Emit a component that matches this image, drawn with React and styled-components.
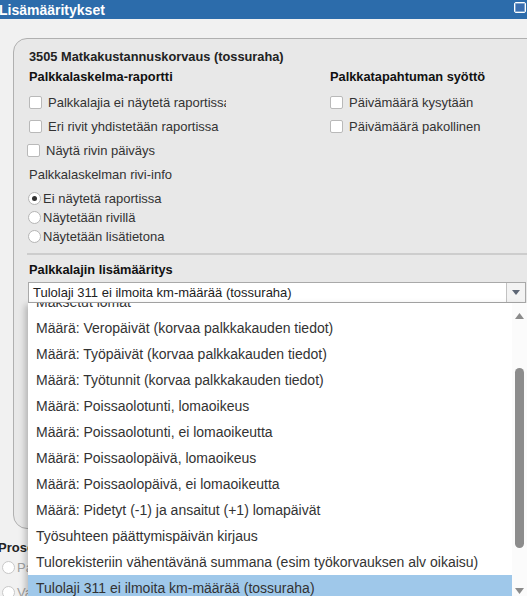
import React from 'react';
import styled, { createGlobalStyle } from 'styled-components';

const GlobalStyle = createGlobalStyle`
  html, body {
    margin: 0;
    padding: 0;
    overflow: hidden;
    background: #f1f1f1;
  }
  body {
    font-family: "Liberation Sans", Arial, sans-serif;
    font-size: 13px;
    color: #222;
  }
`;

const options = [
  'Maksetut lomat',
  'Määrä: Veropäivät (korvaa palkkakauden tiedot)',
  'Määrä: Työpäivät (korvaa palkkakauden tiedot)',
  'Määrä: Työtunnit (korvaa palkkakauden tiedot)',
  'Määrä: Poissaolotunti, lomaoikeus',
  'Määrä: Poissaolotunti, ei lomaoikeutta',
  'Määrä: Poissaolopäivä, lomaoikeus',
  'Määrä: Poissaolopäivä, ei lomaoikeutta',
  'Määrä: Pidetyt (-1) ja ansaitut (+1) lomapäivät',
  'Työsuhteen päättymispäivän kirjaus',
  'Tulorekisteriin vähentävänä summana (esim työkorvauksen alv oikaisu)',
  'Tulolaji 311 ei ilmoita km-määrää (tossuraha)',
];

const App = () => {
  return (
    <>
      <GlobalStyle />
      <Window>
        <TitleBar>
          <span>Lisämääritykset</span>
          <CloseBox />
        </TitleBar>
        <Body>
          <Panel>
            <Title>3505 Matkakustannuskorvaus (tossuraha)</Title>
            <Columns>
              <Column>
                <Heading>Palkkalaskelma-raportti</Heading>
                <CheckRow>
                  <Box />
                  <CheckText>Palkkalajia ei näytetä raportissa</CheckText>
                </CheckRow>
                <CheckRow>
                  <Box />
                  <CheckText>Eri rivit yhdistetään raportissa</CheckText>
                </CheckRow>
                <CheckRow $shift>
                  <Box />
                  Näytä rivin päiväys
                </CheckRow>
              </Column>
              <Column>
                <Heading>Palkkatapahtuman syöttö</Heading>
                <CheckRow>
                  <Box />
                  Päivämäärä kysytään
                </CheckRow>
                <CheckRow>
                  <Box />
                  Päivämäärä pakollinen
                </CheckRow>
              </Column>
            </Columns>
            <Label>Palkkalaskelman rivi-info</Label>
            <RadioGroup>
              <RadioRow>
                <Radio $checked />
                Ei näytetä raportissa
              </RadioRow>
              <RadioRow>
                <Radio />
                Näytetään rivillä
              </RadioRow>
              <RadioRow>
                <Radio />
                Näytetään lisätietona
              </RadioRow>
            </RadioGroup>
            <Divider />
            <Heading>Palkkalajin lisämääritys</Heading>
            <Select>
              <SelectValue>Tulolaji 311 ei ilmoita km-määrää (tossuraha)</SelectValue>
              <SelectArrow>
                <svg width="8" height="5" viewBox="0 0 8 5">
                  <path d="M0 0h8L4 5z" fill="#5d6675" />
                </svg>
              </SelectArrow>
            </Select>
            <CheckRow>
              <Box $accent />
              Maksetaan
            </CheckRow>
          </Panel>
          <Lower>
            <LowerHeading>Prosenttiperusteinen</LowerHeading>
            <RadioRow $dim>
              <Radio $dim />
              Palkka
            </RadioRow>
            <RadioRow $dim>
              <Radio $dim />
              Vakio
            </RadioRow>
          </Lower>
        </Body>
        <Dropdown>
          <List>
            {options.map((o, i) => (
              <Option key={o} $selected={i === options.length - 1}>
                {o}
              </Option>
            ))}
          </List>
          <Scrollbar>
            <svg width="9" height="6" viewBox="0 0 9 6">
              <path d="M0 6h9L4.5 0z" fill="#8b8b8b" />
            </svg>
            <Thumb />
            <svg width="9" height="6" viewBox="0 0 9 6">
              <path d="M0 0h9L4.5 6z" fill="#8b8b8b" />
            </svg>
          </Scrollbar>
        </Dropdown>
      </Window>
    </>
  );
};

export default App;

const Window = styled.div`
  position: relative;
  width: 527px;
  height: 596px;
  overflow: hidden;
  background: #f1f1f1;
`;

const TitleBar = styled.div`
  display: flex;
  align-items: center;
  justify-content: space-between;
  height: 19px;
  background: #2c6cab;
  color: #fff;
  font-weight: bold;
  font-size: 14px;
  margin-left: -1px;
`;

const CloseBox = styled.div`
  width: 10px;
  height: 9px;
  border: 1px solid #fff;
  box-shadow: inset 0 0 0 1px #7fa6cf;
  background: #3b6fb0;
  margin-right: 1px;
  margin-bottom: 4px;
  border-radius: 2px;
`;

const Body = styled.div`
  padding: 19px 0 0 13px;
`;

const Panel = styled.div`
  height: 479px;
  margin-right: -20px;
  padding: 10px 0 0 15px;
  background: #e8e8e8;
  border: 1px solid #b0b0b0;
  border-radius: 14px 0 0 14px;
  overflow: hidden;
`;

const Title = styled.div`
  font-size: 12.8px;
  font-weight: bold;
  line-height: 16px;
  color: #222;
`;

const Columns = styled.div`
  display: grid;
  grid-template-columns: 301px 1fr;
  margin-top: 4px;
`;

const Column = styled.div`
  display: flex;
  flex-direction: column;
`;

const Heading = styled.div`
  font-weight: bold;
  font-size: 12.8px;
  line-height: 16px;
  color: #111;
  margin-bottom: 5px;
`;

const CheckRow = styled.label`
  display: flex;
  align-items: center;
  gap: 6px;
  height: 24px;
  font-size: 13px;
  color: #333;
  margin-left: ${(p) => (p.$shift ? '-2px' : '0')};
`;

const CheckText = styled.span`
  max-width: 178px;
  overflow: hidden;
  white-space: nowrap;
`;

const Box = styled.span`
  width: 11px;
  height: 11px;
  background: #fff;
  border: 1px solid ${(p) => (p.$accent ? '#d08a3c' : '#b9b9b9')};
  border-radius: 2px;
  flex-shrink: 0;
`;

const Label = styled.div`
  font-size: 13px;
  line-height: 16px;
  color: #333;
  margin-top: 5px;
`;

const RadioGroup = styled.div`
  display: flex;
  flex-direction: column;
  margin-top: 6px;
  margin-left: -1px;
`;

const RadioRow = styled.label`
  display: flex;
  align-items: center;
  gap: 2px;
  height: ${(p) => (p.$dim ? '25px' : '19px')};
  font-size: 13px;
  color: ${(p) => (p.$dim ? '#a0a0a0' : '#333')};
  white-space: nowrap;
`;

const Radio = styled.span`
  position: relative;
  width: 11px;
  height: 11px;
  border-radius: 50%;
  background: #fff;
  border: 1px solid ${(p) => (p.$dim ? '#c8c8c8' : '#b5b5b5')};
  flex-shrink: 0;

  &::after {
    content: '';
    display: ${(p) => (p.$checked ? 'block' : 'none')};
    position: absolute;
    left: 3px;
    top: 3px;
    width: 5px;
    height: 5px;
    border-radius: 50%;
    background: #333;
  }
`;

const Divider = styled.div`
  height: 0;
  border-top: 2px solid #cdcdcd;
  margin: 7px 0 7px -2px;
`;

const Select = styled.div`
  display: flex;
  align-items: stretch;
  height: 19px;
  margin-left: -1px;
  margin-right: 20px;
  margin-top: -1px;
  background: #fff;
  border: 1px solid #a9a9a9;
`;

const SelectValue = styled.div`
  flex: 1;
  display: flex;
  align-items: center;
  padding-left: 4px;
  font-size: 13px;
  color: #222;
`;

const SelectArrow = styled.div`
  width: 18px;
  display: flex;
  align-items: center;
  justify-content: center;
  border-left: 1px solid #c2c2c2;
  background: #f3f3f3;
`;

const Lower = styled.div`
  padding: 12px 0 0 2px;
  margin-left: -13px;
`;

const LowerHeading = styled.div`
  font-weight: bold;
  font-size: 13px;
  line-height: 14px;
  color: #222;
  margin-bottom: 0;
  margin-left: -4px;
`;

const Dropdown = styled.div`
  position: absolute;
  left: 28px;
  top: 303px;
  right: 0;
  bottom: 0;
  display: flex;
  background: #fff;
  box-shadow: -3px 2px 6px rgba(0, 0, 0, 0.22);
  overflow: hidden;
`;

const List = styled.div`
  flex: 1;
  margin-top: -14px;
  display: flex;
  flex-direction: column;
`;

const Option = styled.div`
  flex-shrink: 0;
  height: 26px;
  display: flex;
  align-items: center;
  padding-left: 8px;
  font-size: 14px;
  white-space: nowrap;
  color: #333;
  background: ${(p) => (p.$selected ? '#9fc8ea' : 'transparent')};
`;

const Scrollbar = styled.div`
  width: 15px;
  flex-shrink: 0;
  display: flex;
  flex-direction: column;
  align-items: center;
  background: #fbfbfb;
  padding: 10px 0 0;

  svg:last-child {
    margin-top: auto;
    margin-bottom: 2px;
  }
`;

const Thumb = styled.div`
  width: 9px;
  height: 180px;
  margin-top: 49px;
  border-radius: 5px;
  background: #8c8c8c;
`;
